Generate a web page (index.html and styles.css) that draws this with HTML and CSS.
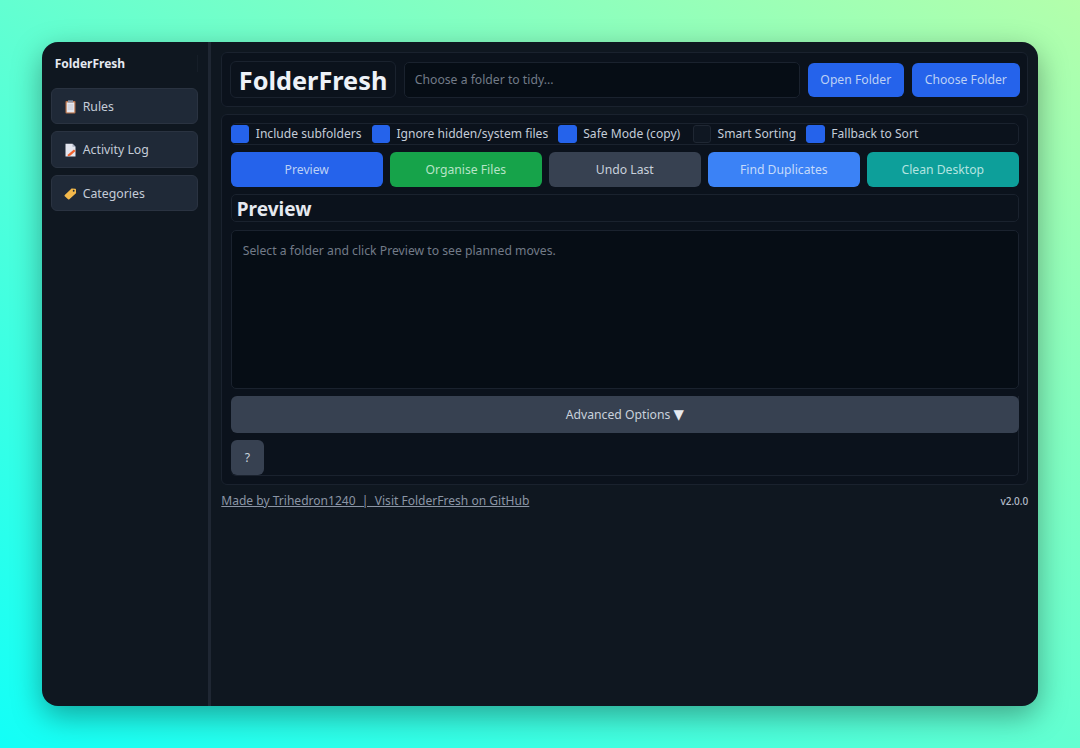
FILE: index.html
```html
<!DOCTYPE html>
<html lang="en">
<head>
<meta charset="utf-8">
<title>FolderFresh</title>
<link rel="stylesheet" href="styles.css">
</head>
<body>
<div class="window">
  <aside class="sidebar">
    <div class="brand">FolderFresh</div>
    <button class="nav-item"><svg class="nav-icon" viewBox="0 0 12 14"><rect x="1" y="1" width="10" height="12.5" rx="1" fill="#b9734a"/><rect x="2.2" y="2.4" width="7.6" height="10" fill="#e6e8f0"/><rect x="3.5" y="0.3" width="5" height="2.2" fill="#8c95a8"/><path d="M3.2 5h5.6M3.2 7h5.6M3.2 9h5.6" stroke="#b6bccb" stroke-width=".8"/></svg>Rules</button>
    <button class="nav-item"><svg class="nav-icon" viewBox="0 0 12 14"><path d="M1 .8h7l3 3v9.6H1z" fill="#e3e5ee"/><path d="M8 .8l3 3H8z" fill="#aab0c0"/><path d="M3.5 11.5l6-5 1.6 1.6-5.4 4.6-2.6.6z" fill="#f0622e"/></svg>Activity Log</button>
    <button class="nav-item"><svg class="nav-icon" viewBox="0 0 14 14"><path d="M.8 9.2L7.6 2.6c.3-.3.6-.4 1-.4l3.6.2c.4 0 .7.3.7.7l.1 3.5c0 .4-.1.7-.4 1L5.8 13.6c-.4.4-1 .4-1.4 0L.8 10.6c-.4-.4-.4-1 0-1.4z" fill="#f2b84b"/><circle cx="10.4" cy="4.6" r="1" fill="#1f2937"/></svg>Categories</button>
  </aside>
  <main class="main">
    <section class="panel top-bar">
      <h1 class="title">FolderFresh</h1>
      <div class="path-input">Choose a folder to tidy...</div>
      <button class="btn btn-blue top-btn">Open Folder</button>
      <button class="btn btn-blue top-btn">Choose Folder</button>
    </section>
    <section class="panel content">
      <div class="options">
        <label class="opt"><span class="box on"></span>Include subfolders</label>
        <label class="opt"><span class="box on"></span>Ignore hidden/system files</label>
        <label class="opt opt-wide"><span class="box on"></span>Safe Mode (copy)</label>
        <label class="opt"><span class="box"></span>Smart Sorting</label>
        <label class="opt"><span class="box on"></span>Fallback to Sort</label>
      </div>
      <div class="actions">
        <button class="btn btn-blue">Preview</button>
        <button class="btn btn-green">Organise Files</button>
        <button class="btn btn-gray">Undo Last</button>
        <button class="btn btn-light">Find Duplicates</button>
        <button class="btn btn-teal">Clean Desktop</button>
      </div>
      <div class="preview-head">Preview</div>
      <div class="preview-box">Select a folder and click Preview to see planned moves.</div>
      <div class="lower">
        <button class="btn btn-gray advanced">Advanced Options <span class="arrow">▼</span></button>
        <button class="btn btn-gray help">?</button>
      </div>
    </section>
    <footer class="footer">
      <a class="links" href="#">Made by Trihedron1240&nbsp; |&nbsp; Visit FolderFresh on GitHub</a>
      <span class="version">v2.0.0</span>
    </footer>
  </main>
</div>
</body>
</html>
```
FILE: styles.css
```css
* { box-sizing: border-box; }
html, body { height: 100%; }
body {
  margin: 0;
  padding: 42px 41.7px;
  background: linear-gradient(to bottom left, #b3ffab 0%, #12fff7 100%);
  font-family: "Noto Sans", sans-serif;
  color: #c9d1dc;
  overflow: hidden;
}
button { font-family: inherit; cursor: pointer; }
.window {
  width: 996.6px;
  height: 664px;
  display: flex;
  background: #0f1720;
  border-radius: 16px;
  box-shadow: 0 10px 30px rgba(0, 0, 0, .35);
  overflow: hidden;
}
.sidebar {
  width: 169px;
  flex: none;
  padding: 13px 10px 13px 9.5px;
  border-right: 3px solid #1f2733;
  display: flex;
  flex-direction: column;
  gap: 7px;
}
.brand {
  height: 26px;
  padding-left: 3.5px;
  font-size: 12px;
  font-weight: 700;
  line-height: 17px;
  color: #e5e9f0;
  background: linear-gradient(#161e28, #161e28) right 0 top 0 / 1px 17px no-repeat;
}
.nav-item {
  height: 36.3px;
  flex: none;
  display: flex;
  align-items: center;
  gap: 5.5px;
  padding: 1px 12px 0;
  background: #1f2937;
  border: 1px solid #2a3341;
  border-radius: 6px;
  color: #c4ccd8;
  font-size: 12.3px;
}
.nav-icon { width: 13px; height: 14px; flex: none; }
.main {
  flex: 1;
  padding: 10px 10px 0 10.6px;
  min-width: 0;
}
.panel {
  background: #0b121c;
  border: 1px solid #1a222e;
  border-radius: 6px;
}
.top-bar {
  height: 55px;
  display: flex;
  align-items: center;
  gap: 8px;
  padding: 0 7.5px;
}
.title {
  margin: 0;
  width: 166px;
  height: 37px;
  padding-left: 8px;
  font-size: 25.3px;
  font-weight: 700;
  line-height: 36px;
  color: #eef2f8;
  border: 1px solid #1a222e;
  border-radius: 6px;
  white-space: nowrap;
}
.path-input {
  flex: 1;
  height: 36px;
  padding: 0 10px;
  line-height: 34px;
  font-size: 12.2px;
  color: #727b88;
  background: #060d15;
  border: 1px solid #1a222e;
  border-radius: 5px;
}
.btn {
  border: 0;
  border-radius: 6px;
  font-size: 12.2px;
  color: #c6d0de;
}
.top-btn { height: 34px; width: 96px; flex: none; }
.top-btn:last-child { width: 108px; }
.btn-blue { background: #2563eb; color: #bcd0f5; }
.btn-green { background: #16a34a; color: #b7e4c7; }
.btn-gray { background: #374151; color: #c9d1dc; }
.btn-light { background: #3b82f6; color: #c5dafa; }
.btn-teal { background: #0d9f9a; color: #b4e4e0; }
.content {
  margin-top: 7px;
  height: 371px;
  padding: 8px 8.5px;
  display: flex;
  flex-direction: column;
}
.options {
  height: 21.5px;
  flex: none;
  display: flex;
  gap: 10px;
  border: 1px solid #1a222e;
  border-radius: 5px;
  align-items: center;
  font-size: 12.1px;
}
.opt { display: flex; align-items: center; gap: 6.5px; color: #c4ccd8; white-space: nowrap; }
.opt:first-child { margin-left: -1px; }
.opt-wide { margin-right: 2.4px; }
.box {
  width: 18.5px;
  height: 18.5px;
  border-radius: 3px;
  background: #0f1722;
  border: 1px solid #1f2733;
}
.box.on { background: #2563eb; border-color: #2563eb; }
.actions {
  margin-top: 7.5px;
  display: grid;
  grid-template-columns: repeat(5, 1fr);
  gap: 7px;
}
.actions .btn { height: 35px; }
.preview-head {
  margin-top: 7px;
  height: 28px;
  padding-left: 5px;
  font-size: 19px;
  font-weight: 700;
  line-height: 28px;
  color: #e5e9f0;
  border: 1px solid #1a222e;
  border-radius: 5px;
}
.preview-box {
  margin-top: 8px;
  height: 159px;
  padding: 11px;
  font-size: 12.2px;
  line-height: 17px;
  color: #727b88;
  background: #060d15;
  border: 1px solid #1a222e;
  border-radius: 5px;
}
.lower {
  margin-top: 7px;
  flex: 1;
  display: flex;
  flex-direction: column;
  gap: 7px;
  align-items: flex-start;
  border: 1px solid #1a222e;
  border-top: 0;
  border-left: 0;
  border-radius: 0 0 5px 5px;
}
.advanced { width: calc(100% + 1px); height: 37px; flex: none; }
.arrow { font-family: "DejaVu Sans", sans-serif; font-size: 13.5px; color: #e5e9f0; }
.help { width: 33px; height: 35px; flex: none; }
.footer {
  margin-top: 7px;
  display: flex;
  justify-content: space-between;
  align-items: center;
  font-size: 12.05px;
}
.links { color: #8b95a5; }
.version { font-size: 10px; font-weight: 500; color: #b4bcc8; }
```
